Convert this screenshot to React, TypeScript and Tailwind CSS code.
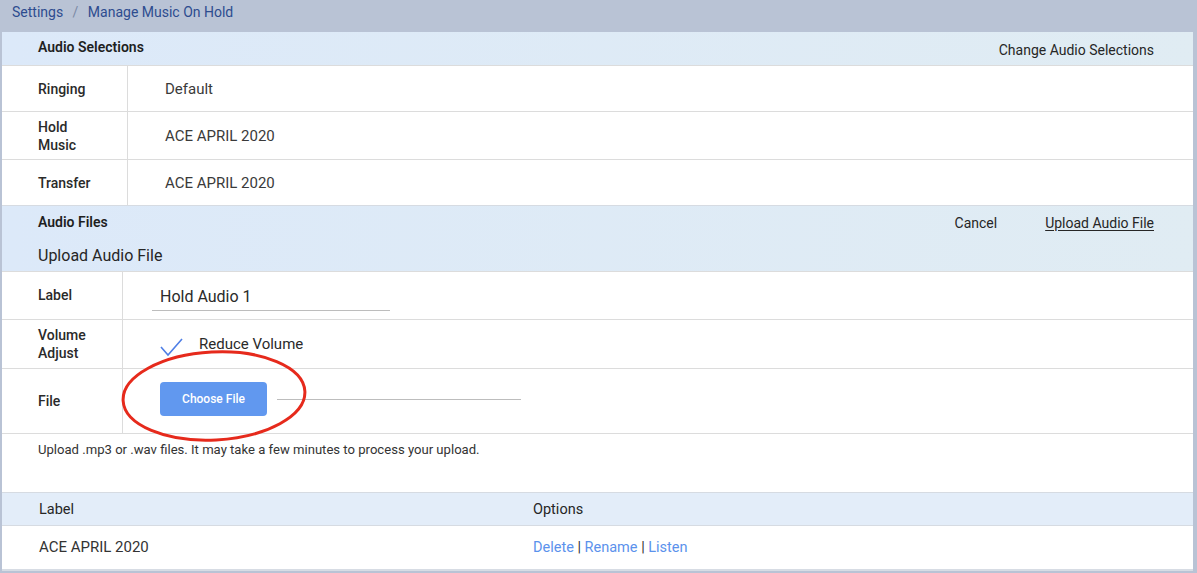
import React from 'react';

const font = { fontFamily: 'Roboto, "Noto Sans", Arial, sans-serif' };

function InfoRow({ label, value, tall }: { label: React.ReactNode; value: string; tall?: boolean }) {
  return (
    <div className={`flex border-t border-[#dcdcdc] ${tall ? 'h-[48px]' : 'h-[46px]'}`}>
      <div className="w-[126px] shrink-0 border-r border-[#dcdcdc] pl-[36px] flex items-center text-[14px] font-medium text-[#2a2a2a] leading-[18px]">
        {label}
      </div>
      <div className="pl-[37px] pt-[1px] flex items-center text-[15px] text-[#3a3a3a]">{value}</div>
    </div>
  );
}

export default function App() {
  return (
    <div className="w-[1197px] h-[573px] bg-[#b9c3d5] overflow-hidden" style={font}>
      <div className="h-[32px] pl-[12px] pt-[2px] text-[14px] text-[#2d4c8f]">
        Settings <span className="text-[#7b8aa6] mx-[6px]">/</span> Manage Music On Hold
      </div>

      <div className="relative ml-[2px] mr-[4px] bg-white border-b-2 border-[#d7dce4]">
        {/* Audio selections */}
        <div className="h-[33px] flex items-center justify-between px-[36px] pr-[39px] bg-gradient-to-r from-[#dce9f9] to-[#e0ecf3]">
          <span className="text-[14px] font-semibold text-[#1f1f1f] -mt-[2px]">Audio Selections</span>
          <span className="text-[14px] text-[#262626] pt-[3px]">Change Audio Selections</span>
        </div>
        <InfoRow label="Ringing" value="Default" />
        <InfoRow label={<span>Hold<br />Music</span>} value="ACE APRIL 2020" tall />
        <InfoRow label="Transfer" value="ACE APRIL 2020" />

        {/* Audio files */}
        <div className="h-[66px] border-t border-[#d6dbe2] bg-gradient-to-r from-[#dce9f9] to-[#e0ecf3] px-[36px] pr-[39px]">
          <div className="flex justify-between items-center pt-[4px]">
            <span className="text-[14px] font-semibold text-[#1f1f1f]">Audio Files</span>
            <div className="flex gap-[48px] text-[14px] text-[#262626] pt-[3px]">
              <span>Cancel</span>
              <span className="underline underline-offset-2">Upload Audio File</span>
            </div>
          </div>
          <div className="text-[16px] text-[#262626] mt-[10px]">Upload Audio File</div>
        </div>

        <div className="flex h-[48px] border-t border-[#dcdcdc]">
          <div className="w-[121px] shrink-0 border-r border-[#dcdcdc] pl-[36px] flex items-center text-[14px] font-medium text-[#2a2a2a]">
            Label
          </div>
          <div className="pl-[29px] flex items-center">
            <div className="w-[238px] border-b border-[#bdbdbd] text-[16px] text-[#2a2a2a] pl-[8px] pb-[1px] mt-[4px]">
              Hold Audio 1
            </div>
          </div>
        </div>

        <div className="flex h-[49px] border-t border-[#dcdcdc]">
          <div className="w-[121px] shrink-0 border-r border-[#dcdcdc] pl-[36px] flex items-center text-[14px] font-medium text-[#2a2a2a] leading-[18px]">
            <span>Volume<br />Adjust</span>
          </div>
          <div className="pl-[37px] flex items-start pt-[14px]">
            <svg width="24" height="24" viewBox="0 0 24 24" className="mt-[1px]">
              <path d="M1 12 L8 20 L22 4" fill="none" stroke="#4f7fe6" strokeWidth="1.6" />
            </svg>
            <span className="ml-[15px] text-[15px] text-[#2a2a2a] -mt-[1px]">Reduce Volume</span>
          </div>
        </div>

        <div className="flex h-[65px] border-t border-[#dcdcdc]">
          <div className="w-[121px] shrink-0 border-r border-[#dcdcdc] pl-[36px] flex items-center text-[14px] font-medium text-[#2a2a2a]">
            File
          </div>
          <div className="pl-[37px] flex items-center">
            <button className="w-[107px] h-[34px] rounded-[4px] bg-[#6198ef] text-white text-[12px] font-medium -mt-[4px]">
              Choose File
            </button>
            <div className="ml-[10px] w-[244px] h-px bg-[#bdbdbd] -mt-[4px]" />
          </div>
        </div>

        <div className="h-[59px] border-t border-[#dcdcdc] pl-[36px] pt-[6px] text-[13.1px] text-[#333]">
          Upload .mp3 or .wav files. It may take a few minutes to process your upload.
        </div>

        <div className="flex h-[33px] items-center border-t border-[#d6dbe2] bg-[#e3edf9] text-[14.5px] text-[#262626]">
          <div className="pl-[37px] w-[531px] pt-[1px]">Label</div>
          <div className="pt-[1px]">Options</div>
        </div>
        <div className="flex h-[44px] items-center border-t border-[#d6dbe2] text-[15px] text-[#333]">
          <div className="pl-[37px] w-[531px]">ACE APRIL 2020</div>
          <div className="text-[#5b92ec] text-[14.5px]">
            Delete <span className="text-[#333]">|</span> Rename <span className="text-[#333]">|</span> Listen
          </div>
        </div>

        <svg className="absolute left-0 top-0 pointer-events-none" width="1191" height="540" style={{ overflow: 'visible' }}>
          <ellipse cx="212" cy="364" rx="91" ry="44" fill="none" stroke="#e62a1c" strokeWidth="3" transform="rotate(-3 212 364)" />
        </svg>
      </div>
    </div>
  );
}
